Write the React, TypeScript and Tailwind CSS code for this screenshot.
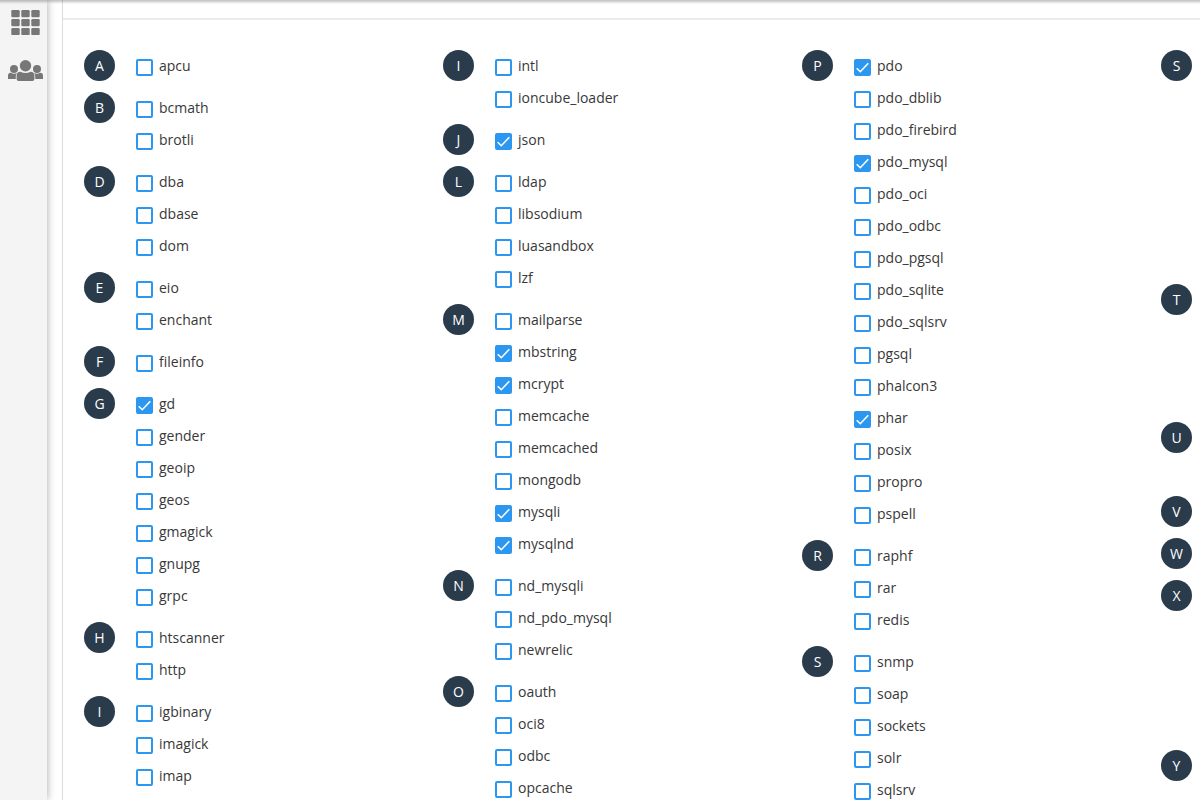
import { useState } from 'react';

type Group = { letter: string; items: string[] };

const columns: Group[][] = [
  [
    { letter: 'A', items: ['apcu'] },
    { letter: 'B', items: ['bcmath', 'brotli'] },
    { letter: 'D', items: ['dba', 'dbase', 'dom'] },
    { letter: 'E', items: ['eio', 'enchant'] },
    { letter: 'F', items: ['fileinfo'] },
    { letter: 'G', items: ['gd', 'gender', 'geoip', 'geos', 'gmagick', 'gnupg', 'grpc'] },
    { letter: 'H', items: ['htscanner', 'http'] },
    { letter: 'I', items: ['igbinary', 'imagick', 'imap'] },
  ],
  [
    { letter: 'I', items: ['intl', 'ioncube_loader'] },
    { letter: 'J', items: ['json'] },
    { letter: 'L', items: ['ldap', 'libsodium', 'luasandbox', 'lzf'] },
    {
      letter: 'M',
      items: ['mailparse', 'mbstring', 'mcrypt', 'memcache', 'memcached', 'mongodb', 'mysqli', 'mysqlnd'],
    },
    { letter: 'N', items: ['nd_mysqli', 'nd_pdo_mysql', 'newrelic'] },
    { letter: 'O', items: ['oauth', 'oci8', 'odbc', 'opcache'] },
  ],
  [
    {
      letter: 'P',
      items: [
        'pdo',
        'pdo_dblib',
        'pdo_firebird',
        'pdo_mysql',
        'pdo_oci',
        'pdo_odbc',
        'pdo_pgsql',
        'pdo_sqlite',
        'pdo_sqlsrv',
        'pgsql',
        'phalcon3',
        'phar',
        'posix',
        'propro',
        'pspell',
      ],
    },
    { letter: 'R', items: ['raphf', 'rar', 'redis'] },
    { letter: 'S', items: ['snmp', 'soap', 'sockets', 'solr', 'sqlsrv'] },
  ],
  [
    { letter: 'S', items: ['ssh2', 'stats', 'suhosin', 'sybase_ct', 'sysvmsg', 'sysvsem', 'sysvshm'] },
    { letter: 'T', items: ['tideways', 'tidy', 'timezonedb', 'trader'] },
    { letter: 'U', items: ['uploadprogress', 'uuid'] },
    { letter: 'V', items: ['vips'] },
    { letter: 'W', items: ['wddx'] },
    { letter: 'X', items: ['xdebug', 'xmlreader', 'xmlrpc', 'xmlwriter', 'xsl'] },
    { letter: 'Y', items: ['yaf'] },
  ],
];

const defaults = ['gd', 'json', 'mbstring', 'mcrypt', 'mysqli', 'mysqlnd', 'pdo', 'pdo_mysql', 'phar'];

function GridIcon() {
  return (
    <svg width="29" height="25" viewBox="0 0 29 25" fill="#777777" aria-hidden="true">
      {[0, 9, 18].map((y) =>
        [0.3, 10.3, 20.3].map((x) => <rect key={`${x}-${y}`} x={x} y={y} width="8.4" height="7.2" rx="1.2" />)
      )}
    </svg>
  );
}

function UsersIcon() {
  return (
    <svg width="35" height="22" viewBox="0 0 35 22" fill="#777777" aria-hidden="true">
      <circle cx="6" cy="9" r="4" />
      <circle cx="29" cy="9" r="4" />
      <path d="M0 19v-3.400q0-2.800 2.800-2.800 3.200 1.600 6.200.2-1.200 1.200-1.200 3v3z" />
      <path d="M35 19v-3.400q0-2.800-2.800-2.800-3.200 1.600-6.200.2 1.200 1.200 1.200 3v3z" />
      <circle cx="17.5" cy="5.7" r="5.7" />
      <path d="M8.600 19v-3.400q0-3.800 3.800-3.800 5.100 2.400 10.200 0 3.800 0 3.800 3.800V19q0 2-2 2H10.600q-2 0-2-2z" />
    </svg>
  );
}

function ExtensionItem({ name, checked, onToggle }: { name: string; checked: boolean; onToggle: () => void }) {
  return (
    <label className="flex h-8 items-start gap-1.5 pt-1.5 leading-5 cursor-pointer">
      <span className="relative mt-[3px] size-[17px] shrink-0">
        <input
          type="checkbox"
          checked={checked}
          onChange={onToggle}
          className="block size-[17px] appearance-none rounded-xs border-2 border-[#2c97f0] bg-white checked:bg-[#2c97f0] cursor-pointer"
        />
        {checked && (
          <svg
            viewBox="0 0 17 17"
            className="pointer-events-none absolute inset-0 size-[17px]"
            fill="none"
            stroke="white"
            strokeWidth="1.6"
            aria-hidden="true"
          >
            <path d="M2.700 9.200l3.600 3.500 8-8.400" />
          </svg>
        )}
      </span>
      <span>{name}</span>
    </label>
  );
}

export default function App() {
  const [enabled, setEnabled] = useState<string[]>(defaults);

  function toggle(name: string) {
    setEnabled((prev) => (prev.includes(name) ? prev.filter((n) => n !== name) : [...prev, name]));
  }

  return (
    <div className="relative flex h-screen overflow-hidden bg-white font-['Open_Sans',sans-serif] text-sm text-[#383838]">
      <div className="pointer-events-none absolute inset-x-0 top-0 z-10 h-1 bg-linear-to-b from-black/25 to-transparent" />
      <nav className="flex w-[47px] shrink-0 flex-col items-center gap-[25px] bg-[#f4f4f4] pt-2.5 pl-1 shadow-[0_0_8px_rgba(0,0,0,0.35)]">
        <button type="button" aria-label="Apps">
          <GridIcon />
        </button>
        <button type="button" aria-label="Users">
          <UsersIcon />
        </button>
      </nav>
      <main className="ml-[15px] min-w-0 flex-1 overflow-hidden border-l border-[#dcdcdc]">
        <div className="h-5 border-b-2 border-[#ebebeb]" />
        <div className="grid grid-cols-[repeat(4,minmax(359px,1fr))] pt-[30px] pl-[21px]">
          {columns.map((groups, i) => (
            <div key={i} className="flex flex-col gap-2.5">
              {groups.map((group) => (
                <section key={group.letter} className="flex items-start gap-[21px]">
                  <h2 className="flex size-[31px] shrink-0 items-center justify-center rounded-full bg-[#2a3b4c] text-white">
                    {group.letter}
                  </h2>
                  <div>
                    {group.items.map((name) => (
                      <ExtensionItem
                        key={name}
                        name={name}
                        checked={enabled.includes(name)}
                        onToggle={() => toggle(name)}
                      />
                    ))}
                  </div>
                </section>
              ))}
            </div>
          ))}
        </div>
      </main>
    </div>
  );
}
